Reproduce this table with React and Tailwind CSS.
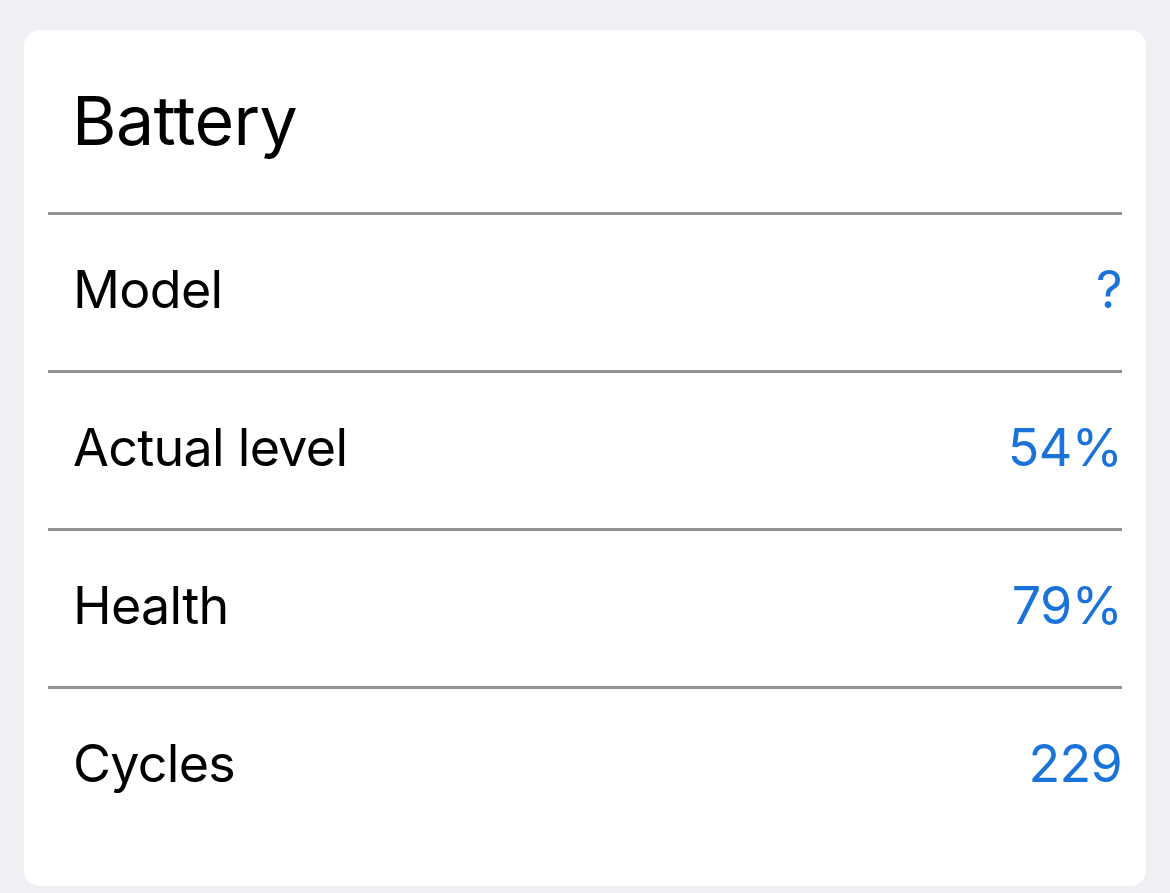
const ROWS = [
  { label: 'Model', value: '?' },
  { label: 'Actual level', value: '54%' },
  { label: 'Health', value: '79%' },
  { label: 'Cycles', value: '229' },
]

export default function App() {
  return (
    <div className="min-h-screen bg-[#efeff4] px-6 pt-[30px] pb-[7px] font-['Inter',sans-serif] text-black">
      <div className="bg-white rounded-[16px] px-6 pb-10 h-[856px]">
        {/* Title */}
        <div className="h-[182px] flex items-center pl-[24px] pb-[2px]">
          <h1 className="text-[68px] leading-none font-normal tracking-[-0.6px]">Battery</h1>
        </div>

        {ROWS.map((row) => (
          <div key={row.label}>
            <div className="h-[3px] bg-[#939393]" />
            <div className="h-[155px] flex items-center justify-between pl-[25px] pb-[6px]">
              <span className="text-[52px] leading-none tracking-[-0.7px]">{row.label}</span>
              <span className="text-[52px] leading-none tracking-[-0.7px] text-[#1a73d8]">{row.value}</span>
            </div>
          </div>
        ))}
      </div>
    </div>
  )
}
